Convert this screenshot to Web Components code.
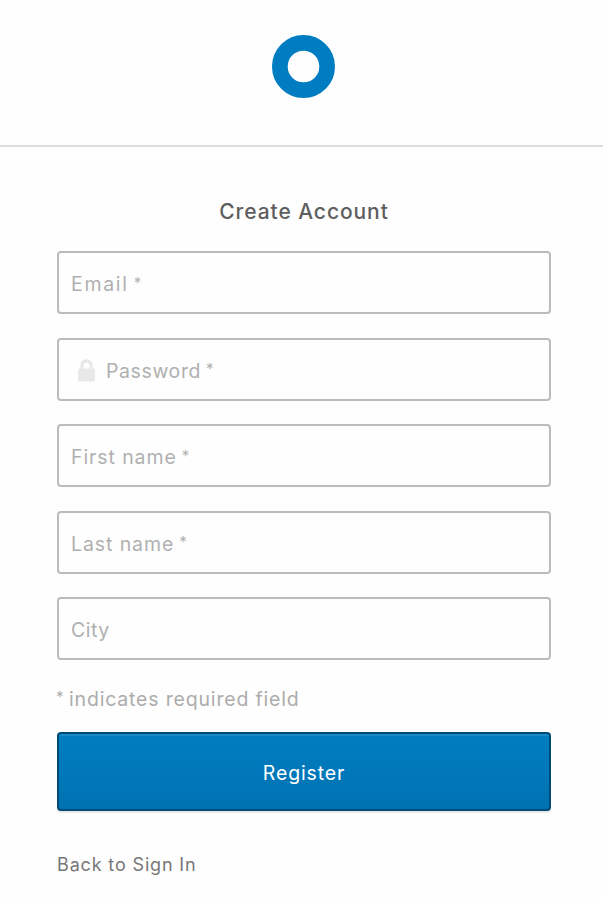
<!DOCTYPE html>
<html lang="en">
<head>
<meta charset="utf-8">
<title>Create Account</title>
<style>
body { margin: 0; background: #fefefe; font-family: Inter, "Open Sans", sans-serif; }
</style>
</head>
<body>
<register-page></register-page>
<script>
class BrandHeader extends HTMLElement {
  constructor() {
    super();
    this.attachShadow({ mode: 'open' }).innerHTML = `
      <style>
        :host { display: flex; justify-content: center; box-sizing: border-box; height: 147px; padding: 35px 0 0 4px; border-bottom: 2px solid #ddd; }
        svg { display: block; width: 63px; height: 63px; }
      </style>
      <svg viewBox="0 0 63 63" aria-label="Logo"><circle cx="31.5" cy="31.5" r="23.65" fill="none" stroke="#007dc1" stroke-width="15.7"/></svg>`;
  }
}
customElements.define('brand-header', BrandHeader);

class FormField extends HTMLElement {
  constructor() {
    super();
    this.attachShadow({ mode: 'open' }).innerHTML = `
      <style>
        :host { display: flex; align-items: center; box-sizing: border-box; height: 63px; padding: 3px 11px 0 12px; border: 2px solid #bbb; border-radius: 4px; color: #b0b0b0; font-size: 19.5px; line-height: 24px; }
        .mark { display: none; font-size: 15px; line-height: 24px; margin: -3px 0 0 5px; }
        :host([required]) .mark { display: block; }
        .label { letter-spacing: var(--track, 0.9px); white-space: nowrap; }
      </style>
      <slot name="icon"></slot><span class="label"><slot></slot></span><span class="mark">*</span>`;
  }
}
customElements.define('form-field', FormField);

class LockIcon extends HTMLElement {
  constructor() {
    super();
    this.attachShadow({ mode: 'open' }).innerHTML = `
      <style>
        :host { display: block; width: 17px; margin: -1px 11px 0 7px; }
        svg { display: block; width: 17px; height: 23px; }
      </style>
      <svg viewBox="0 0 17 23"><path d="M4 11V6.6a4.5 4.8 0 0 1 9 0V11" fill="none" stroke="#e8e8e8" stroke-width="3.2"/><rect y="9.5" width="17" height="13" rx="1.5" fill="#e8e8e8"/></svg>`;
  }
}
customElements.define('lock-icon', LockIcon);

class SubmitButton extends HTMLElement {
  constructor() {
    super();
    this.attachShadow({ mode: 'open' }).innerHTML = `
      <style>
        :host { display: block; }
        button { display: block; box-sizing: border-box; width: 100%; height: 79px; padding: 3px 0 0; border: 2px solid #004b75; border-radius: 4px; background: linear-gradient(#007dc1, #0073b2); box-shadow: inset 0 2px 0 #1a88c5, 0 2px 0 #e8e8e8; color: #fff; font: 400 19.5px/24px Inter, sans-serif; letter-spacing: .85px; }
      </style>
      <button type="button"><slot></slot></button>`;
  }
}
customElements.define('submit-button', SubmitButton);

class RegisterPage extends HTMLElement {
  constructor() {
    super();
    this.attachShadow({ mode: 'open' }).innerHTML = `
      <style>
        :host { display: block; height: 899px; overflow: hidden; }
        main { padding: 51px 52px 0 57px; }
        h1 { margin: 0 0 25px; color: #5e5e5e; font-size: 21px; font-weight: 500; line-height: 28px; letter-spacing: .93px; text-align: center; }
        .fields { display: grid; gap: 23.5px; }
        .note { display: flex; margin: 27px 0 21px; color: #acacac; font-size: 19.5px; line-height: 24px; letter-spacing: .82px; }
        .star { width: 12px; font-size: 15px; letter-spacing: 0; margin: -2px 0 0 -1px; padding-right: 1px; }
        a { display: block; margin-top: 42px; color: #777; font-size: 18px; line-height: 24px; letter-spacing: .85px; text-decoration: none; }
      </style>
      <brand-header></brand-header>
      <main>
        <h1>Create Account</h1>
        <div class="fields">
          <form-field required style="--track:1.7px">Email</form-field>
          <form-field required style="--track:.6px"><lock-icon slot="icon"></lock-icon>Password</form-field>
          <form-field required>First name</form-field>
          <form-field required>Last name</form-field>
          <form-field style="--track:.5px">City</form-field>
        </div>
        <div class="note"><span class="star">*</span><span>indicates required field</span></div>
        <submit-button>Register</submit-button>
        <a href="#">Back to Sign In</a>
      </main>`;
  }
}
customElements.define('register-page', RegisterPage);
</script>
</body>
</html>
